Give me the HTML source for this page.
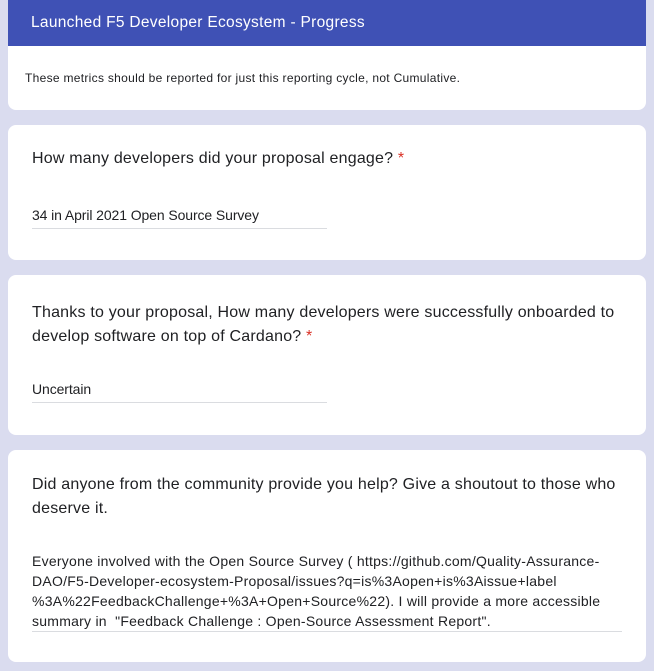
<!DOCTYPE html>
<html><head><style>
body{margin:0;background:#dadcef;font-family:"Liberation Sans",sans-serif;width:654px;height:671px;overflow:hidden;position:relative;color:#202124}
.card{position:absolute;left:8px;width:638px;background:#fff;border-radius:8px;overflow:hidden}
.hdr{background:#3f51b5;color:#fff;height:46px;font-size:15.5px;line-height:46px;padding-left:23px;letter-spacing:0.3px}
.t{position:absolute;white-space:nowrap}
.q{font-size:16px;left:24px;letter-spacing:0.2px}
.a{font-size:14px;left:24px;letter-spacing:-0.1px}
.ln{position:absolute;left:24px;height:1px;background:#dadce0}
.r{color:#d93025}
</style></head><body>
<div class="card" style="top:0;height:110px;border-radius:0 0 8px 8px">
<div class="hdr">Launched F5 Developer Ecosystem - Progress</div>
<div class="t" style="left:17px;top:71px;font-size:12px;letter-spacing:0.3px">These metrics should be reported for just this reporting cycle, not Cumulative.</div>
</div>
<div class="card" style="top:125px;height:135px">
<div class="t q" style="top:25px">How many developers did your proposal engage? <span class="r">*</span></div>
<div class="t a" style="top:82px">34 in April 2021 Open Source Survey</div>
<div class="ln" style="top:103px;width:295px"></div>
</div>
<div class="card" style="top:275px;height:160px">
<div class="t q" style="top:26px;line-height:24px">Thanks to your proposal, How many developers were successfully onboarded to<br>develop software on top of Cardano? <span class="r">*</span></div>
<div class="t a" style="top:106px">Uncertain</div>
<div class="ln" style="top:127px;width:295px"></div>
</div>
<div class="card" style="top:450px;height:212px">
<div class="t q" style="top:23px;line-height:24px">Did anyone from the community provide you help? Give a shoutout to those who<br>deserve it.</div>
<div class="t a" style="top:101px;line-height:20px;font-size:14px;letter-spacing:0.25px">Everyone involved with the Open Source Survey ( https://github.com/Quality-Assurance-<br>DAO/F5-Developer-ecosystem-Proposal/issues?q=is%3Aopen+is%3Aissue+label<br>%3A%22FeedbackChallenge+%3A+Open+Source%22). I will provide a more accessible<br>summary in &nbsp;"Feedback Challenge : Open-Source Assessment Report".</div>
<div class="ln" style="top:181px;width:590px"></div>
</div>
</body></html>
